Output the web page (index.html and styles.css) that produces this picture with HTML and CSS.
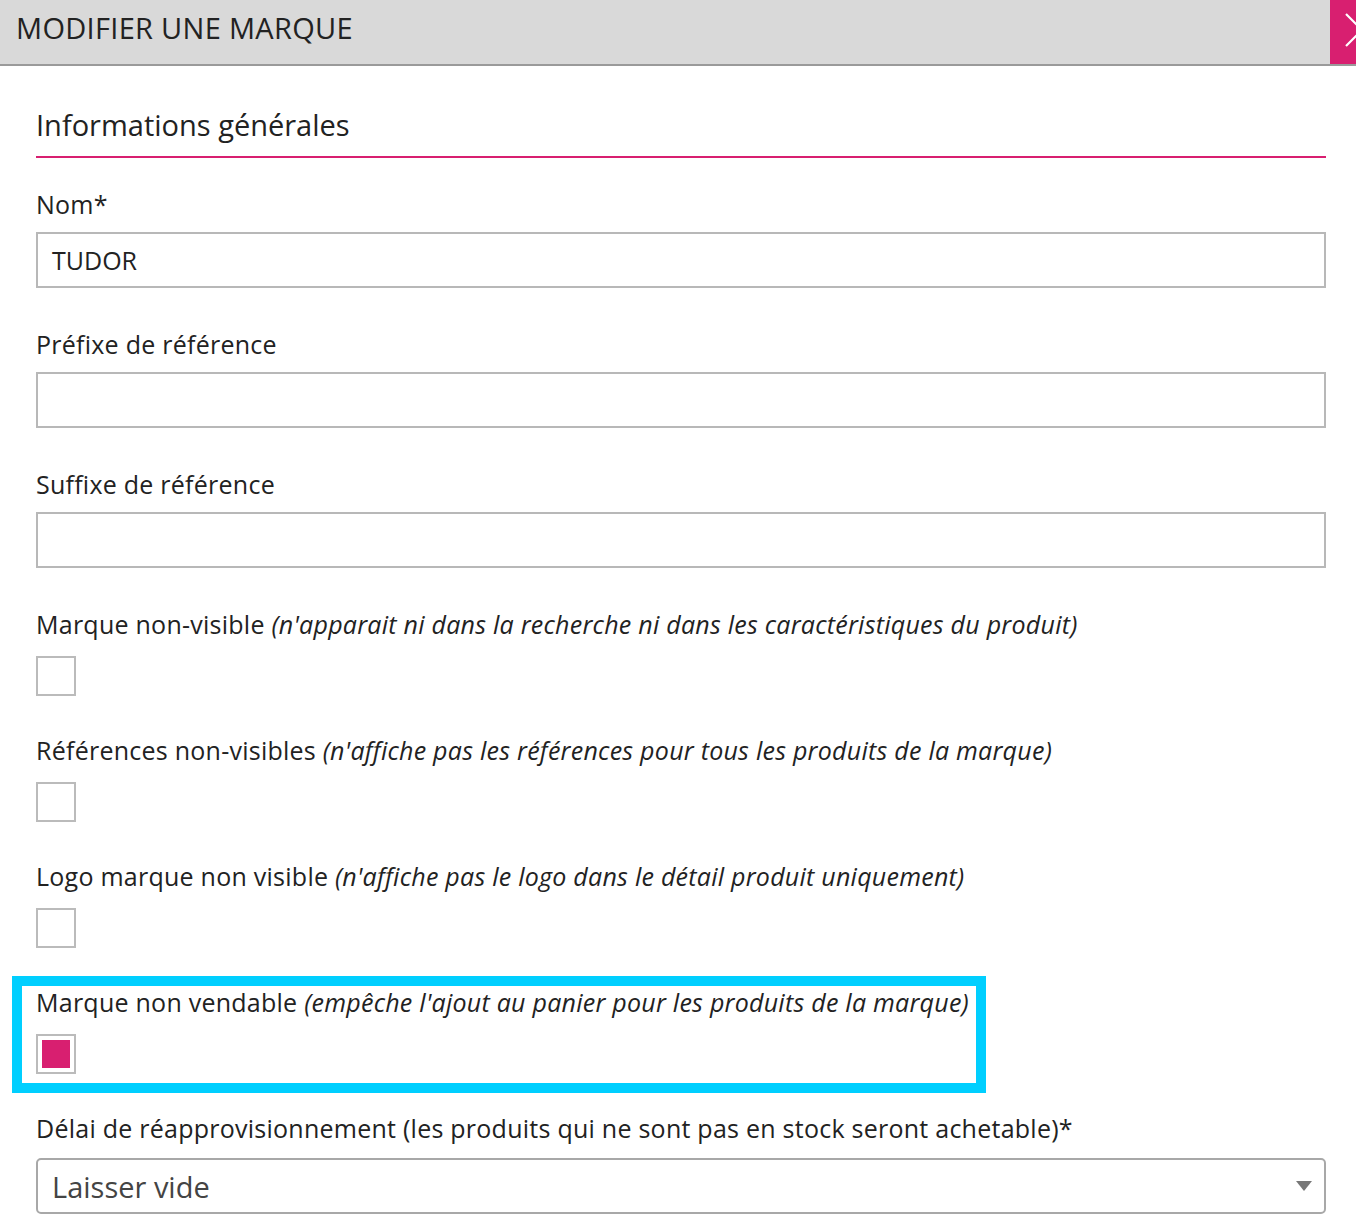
FILE: index.html
```html
<!DOCTYPE html>
<html lang="fr">
<head>
<meta charset="utf-8">
<title>Modifier une marque</title>
<link rel="stylesheet" href="styles.css">
</head>
<body>
<div class="modal">
  <header class="modal-head">
    <h1 class="modal-title">MODIFIER UNE MARQUE</h1>
    <button class="close" type="button" aria-label="Fermer">
      <svg width="64" height="64" viewBox="0 0 64 64"><path d="M16 14 L48 46 M16 46 L48 14" stroke="#fff" stroke-width="2.2" fill="none"/></svg>
    </button>
  </header>
  <div class="modal-body">
    <h2 class="section-title">Informations générales</h2>

    <div class="field">
      <div class="label">Nom*</div>
      <div class="input">TUDOR</div>
    </div>
    <div class="field">
      <div class="label">Préfixe de référence</div>
      <div class="input"></div>
    </div>
    <div class="field field-last-input">
      <div class="label">Suffixe de référence</div>
      <div class="input"></div>
    </div>

    <div class="field check-field">
      <div class="label">Marque non-visible <em>(n'apparait ni dans la recherche ni dans les caractéristiques du produit)</em></div>
      <div class="checkbox"></div>
    </div>
    <div class="field check-field">
      <div class="label">Références non-visibles <em>(n'affiche pas les références pour tous les produits de la marque)</em></div>
      <div class="checkbox"></div>
    </div>
    <div class="field check-field">
      <div class="label">Logo marque non visible <em>(n'affiche pas le logo dans le détail produit uniquement)</em></div>
      <div class="checkbox"></div>
    </div>
    <div class="field check-field highlight">
      <div class="label">Marque non vendable <em>(empêche l'ajout au panier pour les produits de la marque)</em></div>
      <div class="checkbox checked"></div>
    </div>

    <div class="field">
      <div class="label">Délai de réapprovisionnement (les produits qui ne sont pas en stock seront achetable)*</div>
      <div class="select"><span>Laisser vide</span><i class="arrow"></i></div>
    </div>
  </div>
</div>
</body>
</html>
```

FILE: styles.css
```css
html, body {
  margin: 0;
  padding: 0;
  background: #fff;
  overflow: hidden;
}
body {
  font-family: "Open Sans", "Noto Sans", sans-serif;
  color: #222;
}
.modal {
  width: 1356px;
}
.modal-head {
  display: flex;
  height: 64px;
  background: #d9d9d9;
  border-bottom: 2px solid #9a9a9a;
  overflow: hidden;
}
.modal-title {
  flex: 1;
  margin: 0;
  padding-left: 16px;
  font-size: 29px;
  font-weight: 400;
  line-height: 55px;
  letter-spacing: 0.3px;
  color: #222;
}
.close {
  flex: none;
  width: 64px;
  height: 64px;
  margin-right: -38px;
  padding: 0;
  border: 0;
  background: #d81f70;
}
.close svg {
  display: block;
}
.modal-body {
  display: flex;
  flex-direction: column;
  padding: 0 30px 0 36px;
}
.section-title {
  margin: 0 0 32px;
  padding: 42px 0 14px;
  font-size: 29px;
  font-weight: 400;
  line-height: 34px;
  border-bottom: 2px solid #d81f70;
}
.field {
  display: flex;
  flex-direction: column;
  margin-bottom: 42px;
}
.check-field {
  margin-bottom: 40px;
}
.label {
  font-size: 25px;
  line-height: 28px;
  letter-spacing: 0.25px;
  white-space: nowrap;
}
.label em {
  font-style: italic;
}
.input {
  box-sizing: border-box;
  height: 56px;
  margin-top: 14px;
  padding: 0 14px;
  border: 2px solid #b8b8b8;
  font-size: 25px;
  line-height: 52px;
}
.checkbox {
  box-sizing: border-box;
  width: 40px;
  height: 40px;
  margin-top: 18px;
  border: 2px solid #bbb;
}
.checkbox.checked {
  padding: 4px;
  background: #d81f70;
  background-clip: content-box;
}
.highlight {
  box-sizing: border-box;
  width: 974px;
  margin-left: -24px;
  margin-top: -12px;
  margin-bottom: 21px;
  padding: 2px 0 9px 14px;
  border: 10px solid #00cfff;
}
.select {
  box-sizing: border-box;
  display: flex;
  align-items: center;
  justify-content: space-between;
  height: 56px;
  margin-top: 16px;
  padding: 0 12px 0 14px;
  border: 2px solid #a8a8a8;
  border-radius: 5px;
  font-size: 29px;
  color: #444;
}
.arrow {
  width: 0;
  height: 0;
  border-left: 8px solid transparent;
  border-right: 8px solid transparent;
  border-top: 10px solid #777;
}
```
